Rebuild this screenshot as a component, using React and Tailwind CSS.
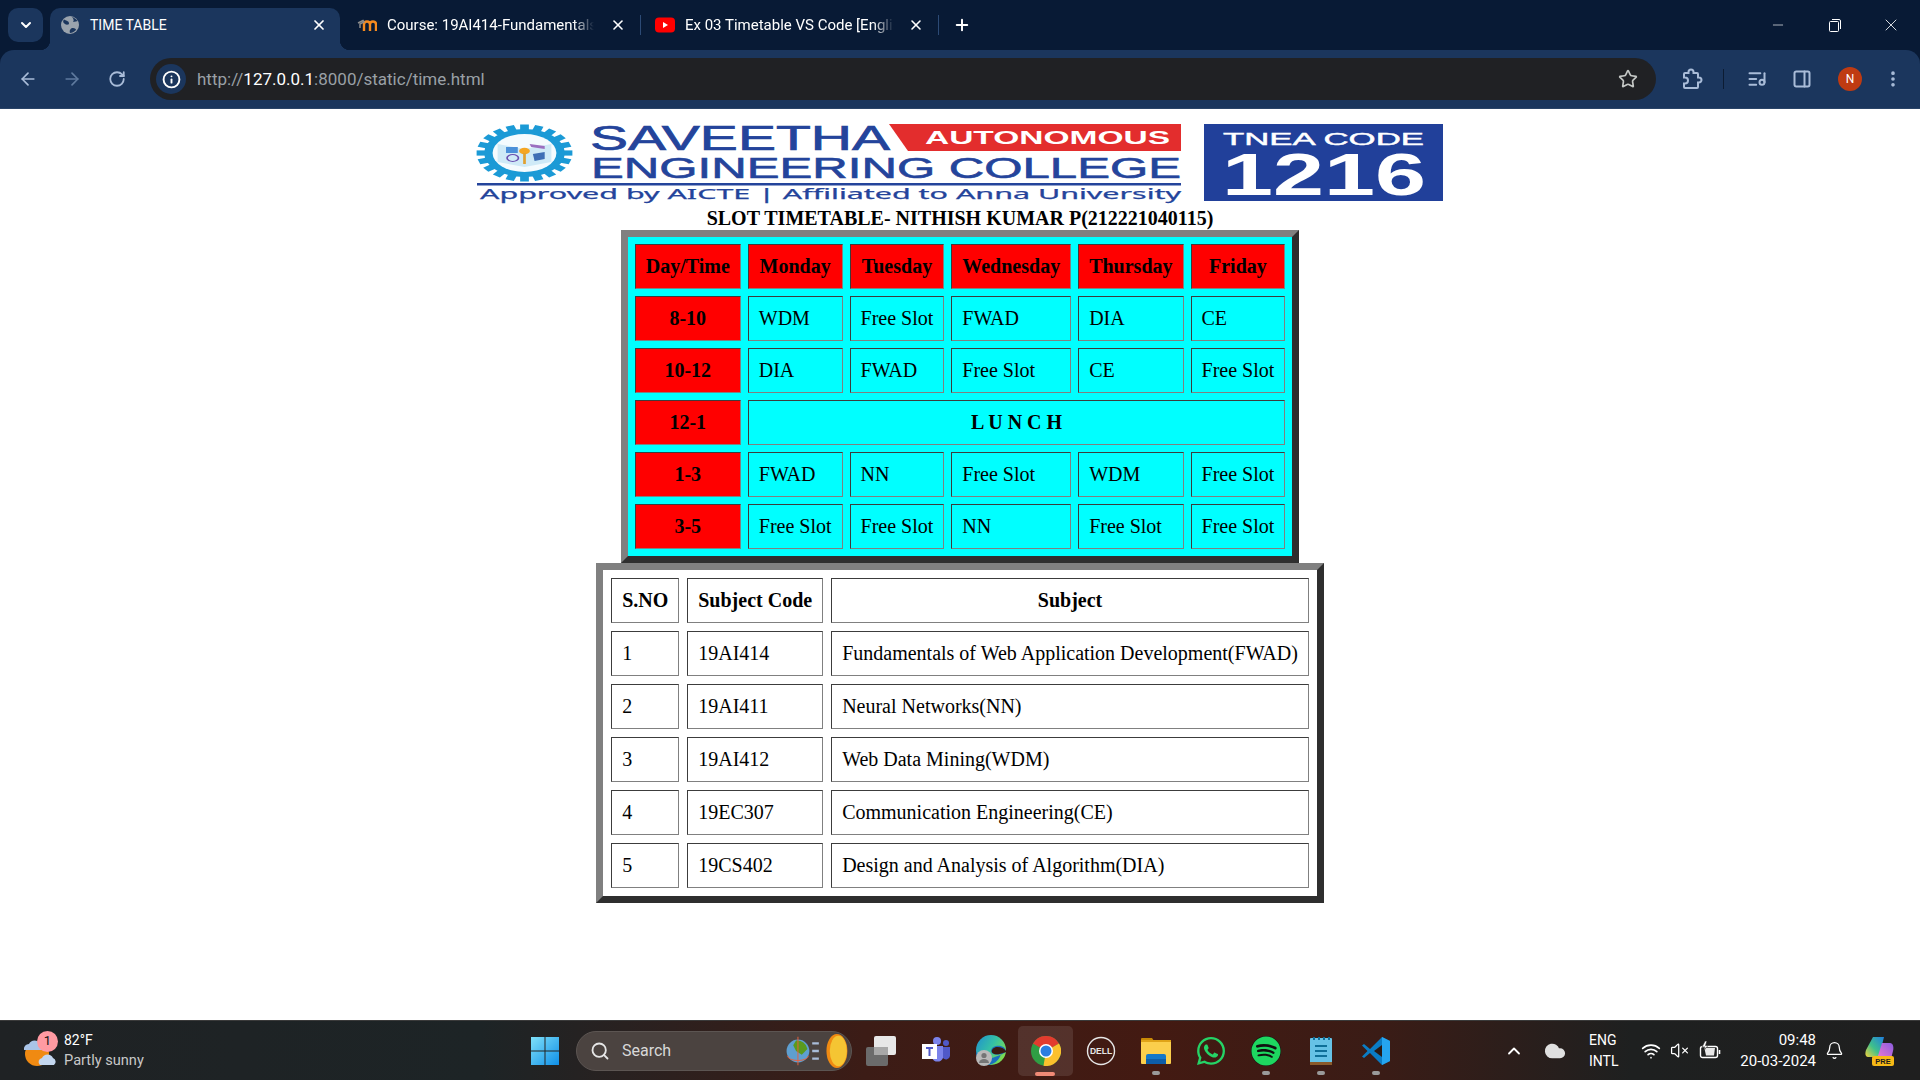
import React from "react";
import {
  ArrowLeft,
  ArrowRight,
  Bell,
  ChevronDown,
  ChevronUp,
  Cloud,
  EllipsisVertical,
  Info,
  ListMusic,
  Minus,
  PanelRight,
  Plus,
  RotateCw,
  Search,
  Star,
  VolumeX,
  Wifi,
  X,
} from "lucide-react";
import { FaSpotify, FaWhatsapp } from "react-icons/fa";

const timetable = [
  ["8-10", "WDM", "Free Slot", "FWAD", "DIA", "CE"],
  ["10-12", "DIA", "FWAD", "Free Slot", "CE", "Free Slot"],
  ["12-1"],
  ["1-3", "FWAD", "NN", "Free Slot", "WDM", "Free Slot"],
  ["3-5", "Free Slot", "Free Slot", "NN", "Free Slot", "Free Slot"],
];

const subjects = [
  ["1", "19AI414", "Fundamentals of Web Application Development(FWAD)"],
  ["2", "19AI411", "Neural Networks(NN)"],
  ["3", "19AI412", "Web Data Mining(WDM)"],
  ["4", "19EC307", "Communication Engineering(CE)"],
  ["5", "19CS402", "Design and Analysis of Algorithm(DIA)"],
];

// browser default look for <table border>: outset frame, inset cells
const tableFrame =
  "border-separate border-[7px] border-t-[#808080] border-l-[#808080] border-r-[#2e2e2e] border-b-[#2e2e2e]";
const cellBorder =
  "border border-t-[#3c3c3c] border-l-[#3c3c3c] border-r-[#808080] border-b-[#808080] p-[10px] h-[45px] leading-[23px]";

function SaveethaLogo() {
  const teeth = Array.from({ length: 20 }, (_, i) => i * 18);
  return (
    <svg viewBox="476 124 970 80" className="w-[970px] h-[80px] block">
      {/* gear badge */}
      <g transform="translate(524.5 153) scale(1.68 1)">
        {teeth.map((a) => (
          <rect key={a} x="-2.6" y="-28.5" width="5.2" height="6" fill="#1b9ad6" transform={`rotate(${a})`} />
        ))}
        <circle r="24" fill="#1b9ad6" />
        <circle r="19" fill="#f4fbfe" />
        <path d="M-16 -9 L0 -4 L16 -9 L16 9 L0 14 L-16 9 Z" fill="#cfeaf7" />
        <rect x="-11" y="-6" width="7" height="6" fill="#4a90d9" />
        <circle cx="-7" cy="5" r="3.4" fill="none" stroke="#6a4fb0" strokeWidth="1" />
        <path d="M5 1 L12 -1 L12 6 L6 8 Z" fill="#3f6fb5" />
        <path d="M3 -9 L12 -7 L12 -4 L4 -6 Z" fill="#9b6fc0" />
        <circle cy="-2" r="3.2" fill="#f5a623" />
        <rect x="-0.8" y="0" width="1.6" height="11" fill="#e0a030" />
      </g>
      <rect x="477" y="183" width="704" height="2.5" fill="#24449b" />

      <text x="590" y="150" fontFamily="Liberation Sans, sans-serif" fontSize="35" fill="#24449b" stroke="#24449b" strokeWidth="0.7" textLength="300" lengthAdjust="spacingAndGlyphs">
        SAVEETHA
      </text>
      <polygon points="889,124 1181,124 1181,151 908,151" fill="#e32d2d" />
      <text x="925" y="144" fontFamily="Liberation Sans, sans-serif" fontSize="18" fontWeight="700" fill="#fff" textLength="245" lengthAdjust="spacingAndGlyphs">
        AUTONOMOUS
      </text>
      <text x="591" y="178" fontFamily="Liberation Sans, sans-serif" fontSize="30" fill="#24449b" stroke="#24449b" strokeWidth="0.6" textLength="590" lengthAdjust="spacingAndGlyphs">
        ENGINEERING COLLEGE
      </text>
      <text x="480" y="199" fontFamily="Noto Sans, sans-serif" fontSize="15" fill="#24449b" stroke="#24449b" strokeWidth="0.25" textLength="701" lengthAdjust="spacingAndGlyphs">
        Approved by AICTE  |  Affiliated to Anna University
      </text>

      <rect x="1204" y="124" width="239" height="77" fill="#21409a" />
      <text x="1223" y="145" fontFamily="Liberation Sans, sans-serif" fontSize="17" fill="#fff" stroke="#fff" strokeWidth="0.4" textLength="201" lengthAdjust="spacingAndGlyphs">
        TNEA CODE
      </text>
      <text x="1222" y="195" fontFamily="Liberation Sans, sans-serif" fontSize="60" fontWeight="700" fill="#fff" textLength="204" lengthAdjust="spacingAndGlyphs">
        1216
      </text>
    </svg>
  );
}

function GlobeFavicon() {
  return (
    <svg viewBox="0 0 18 18" className="w-[18px] h-[18px] shrink-0">
      <circle cx="9" cy="9" r="9" fill="#9aa3ad" />
      <path d="M3 3.5 C6 5 8 5 8 7.5 C8 9 5 9 4 8 C2 7 1.5 5 3 3.5Z M9 17 C8 14 10 12 12 12 C14 12 15 13 15 14 C13 16 11 17 9 17Z M11 1 C13 3 13 5 12 6 C14 6 16 5 16.5 5 C15 3 13 1.5 11 1Z" fill="#1b365d" />
    </svg>
  );
}

function MoodleFavicon() {
  return (
    <svg viewBox="0 0 20 16" className="w-[20px] h-[16px] shrink-0">
      <path d="M7 14V7.5C7 5.5 8.5 4.5 10 4.5S13 5.5 13 7.5V14M13 7.5C13 5.5 14.5 4.5 16 4.5S19 5.5 19 7.5V14" fill="none" stroke="#f58a1f" strokeWidth="2.4" />
      <path d="M1 6L6 3.5L7 5L3 7V11" fill="none" stroke="#8a8a8a" strokeWidth="1.5" />
    </svg>
  );
}

function YoutubeFavicon() {
  return (
    <svg viewBox="0 0 20 16" className="w-[20px] h-[16px] shrink-0">
      <rect width="20" height="15" y="0.5" rx="4" fill="#f00" />
      <path d="M8 5L13 8L8 11Z" fill="#fff" />
    </svg>
  );
}

function Tab({ icon, title, active, textWidth }) {
  if (active) {
    return (
      <div className="relative w-[290px] h-[42px] bg-[#1b365d] rounded-t-[10px] flex items-center pl-[11px] pr-[13px] pb-[8px]">
        <span className="absolute left-[-10px] bottom-0 w-[10px] h-[10px] bg-[radial-gradient(circle_at_0_0,#081a35_10px,#1b365d_10.5px)]" />
        <span className="absolute right-[-10px] bottom-0 w-[10px] h-[10px] bg-[radial-gradient(circle_at_100%_0,#081a35_10px,#1b365d_10.5px)]" />
        {icon}
        <span className="ml-[11px] flex-1 text-[14px] text-white">{title}</span>
        <X size={16} strokeWidth={2.6} className="text-white" />
      </div>
    );
  }
  return (
    <div className="w-[298px] h-[42px] flex items-center pl-[14px] pr-[15px] pb-[8px] relative">
      {icon}
      <span
        className="ml-[10px] text-[15px] text-white whitespace-nowrap overflow-hidden [mask-image:linear-gradient(to_right,#000_90%,transparent)]"
        style={{ width: textWidth }}
      >
        {title}
      </span>
      <X size={16} strokeWidth={2.4} className="ml-auto text-white" />
      <span className="absolute right-0 top-[7px] h-[20px] w-px bg-[#2c4a75]" />
    </div>
  );
}

function TabStrip() {
  return (
    <div className="h-[50px] bg-[#081a35] flex items-end pl-[8px] shrink-0">
      <div className="w-[35px] h-[34px] mb-[8px] bg-[#1b365d] rounded-[10px] flex items-center justify-center mr-[7px]">
        <ChevronDown size={16} strokeWidth={3} className="text-white" />
      </div>
      <Tab active icon={<GlobeFavicon />} title="TIME TABLE" />
      <div className="flex ml-[3px]">
        <Tab icon={<MoodleFavicon />} title="Course: 19AI414-Fundamentals of Web" textWidth={207} />
        <Tab icon={<YoutubeFavicon />} title="Ex 03 Timetable VS Code [English]" textWidth={209} />
      </div>
      <Plus size={18} strokeWidth={2.6} className="text-white ml-[14px] mb-[16px]" />
      <div className="ml-auto flex items-center h-[50px] text-white pr-[19px]">
        <Minus size={16} strokeWidth={1} />
        <svg viewBox="0 0 14 14" className="w-[14px] h-[14px] ml-[42px] fill-none stroke-white">
          <rect x="1.5" y="3.5" width="9" height="10" rx="1" />
          <path d="M4 1.5H11A1.5 1.5 0 0 1 12.5 3V11" />
        </svg>
        <X size={20} strokeWidth={1} className="ml-[39px]" />
      </div>
    </div>
  );
}

function ExtensionIcon() {
  return (
    <svg viewBox="0 0 24 24" className="w-[24px] h-[24px] ml-[23px] fill-none stroke-[#a9bcd8] stroke-2">
      <path d="M6 6H9.5V5A2.5 2.5 0 0 1 14.5 5V6H18A1 1 0 0 1 19 7V10.5H20A2.5 2.5 0 0 1 20 15.5H19V20A1 1 0 0 1 18 21H6A1 1 0 0 1 5 20V16.5H6A3 3 0 0 0 6 10.5H5V7A1 1 0 0 1 6 6Z" />
    </svg>
  );
}

function Toolbar() {
  return (
    <div className="h-[59px] bg-[#1b365d] rounded-t-[14px] flex items-center pl-[18px] pr-[17px] shrink-0 border-b border-[#2a4468]">
      <ArrowLeft size={20} className="text-[#a9bcd8]" />
      <ArrowRight size={20} className="text-[#5f7a9e] ml-[24px]" />
      <RotateCw size={18} strokeWidth={2.4} className="text-[#a9bcd8] ml-[26px]" />
      <div className="ml-[24px] w-[1506px] h-[42px] rounded-full bg-[#202124] flex items-center pl-[6px] pr-[18px]">
        <div className="w-[30px] h-[30px] rounded-full bg-[#1b365d] flex items-center justify-center">
          <Info size={19} strokeWidth={2.4} className="text-white" />
        </div>
        <span className="ml-[11px] pt-[1px] text-[17px] text-[#9aa0a6]">
          http://<span className="text-white">127.0.0.1</span>:8000/static/time.html
        </span>
        <Star size={20} strokeWidth={2} className="ml-auto text-[#c4c7c5]" />
      </div>
      <ExtensionIcon />
      <span className="w-px h-[20px] bg-[#0c1c33] ml-[20px]" />
      <ListMusic size={20} strokeWidth={2.4} className="text-[#a9bcd8] ml-[23px]" />
      <PanelRight size={20} strokeWidth={2.4} className="text-[#a9bcd8] ml-[25px]" />
      <div className="w-[24px] h-[24px] rounded-full bg-[#bf3b12] ml-[26px] flex items-center justify-center text-white text-[12px]">N</div>
      <EllipsisVertical size={20} strokeWidth={2.4} className="text-[#a9bcd8] ml-[21px]" />
    </div>
  );
}

function Page() {
  return (
    <main className="flex-1 min-h-0 bg-white flex flex-col items-center overflow-hidden text-black text-[20px] leading-[23px] [font-family:'Liberation_Serif',serif]">
      <div className="mt-[15px] mb-[3px] pl-[1px]">
        <SaveethaLogo />
      </div>
      <h1 className="font-bold text-[20px] leading-[23px]">SLOT TIMETABLE- NITHISH KUMAR P(212221040115)</h1>
      <table className={`${tableFrame} border-spacing-[7px] bg-[#00ffff]`}>
        <thead>
          <tr>
            {["Day/Time", "Monday", "Tuesday", "Wednesday", "Thursday", "Friday"].map((d) => (
              <th key={d} className={`${cellBorder} bg-[#ff0000] font-bold`}>{d}</th>
            ))}
          </tr>
        </thead>
        <tbody>
          {timetable.map((row) => (
            <tr key={row[0]}>
              <th className={`${cellBorder} bg-[#ff0000] font-bold`}>{row[0]}</th>
              {row.length === 1 ? (
                <th colSpan={5} className={`${cellBorder} font-bold`}>L U N C H</th>
              ) : (
                row.slice(1).map((c, i) => (
                  <td key={i} className={cellBorder}>{c}</td>
                ))
              )}
            </tr>
          ))}
        </tbody>
      </table>
      <table className={`${tableFrame} border-spacing-[8px] bg-white`}>
        <thead>
          <tr>
            {["S.NO", "Subject Code", "Subject"].map((h) => (
              <th key={h} className={`${cellBorder} font-bold`}>{h}</th>
            ))}
          </tr>
        </thead>
        <tbody>
          {subjects.map((row) => (
            <tr key={row[0]}>
              {row.map((c, i) => (
                <td key={i} className={cellBorder}>{c}</td>
              ))}
            </tr>
          ))}
        </tbody>
      </table>
    </main>
  );
}

function WeatherIcon() {
  return (
    <div className="relative w-[36px] h-[36px]">
      <svg viewBox="0 0 36 36" className="w-[36px] h-[36px]">
        <circle cx="15" cy="21" r="12" fill="#f08a12" />
        <path d="M2 17a5 5 0 0 1 5-6 6 6 0 0 1 11 0 3 3 0 0 1 1 6Z" fill="#a9c4e8" />
        <path d="M18 32a4 4 0 0 1 2-7 6 6 0 0 1 11 0 4 4 0 0 1 1 7Z" fill="#c3d6ef" />
      </svg>
      <span className="absolute left-[15px] top-[-2px] w-[21px] h-[21px] rounded-full bg-[#ff9aa2] text-[#111] text-[13px] flex items-center justify-center">1</span>
    </div>
  );
}

function WindowsLogo() {
  return (
    <svg viewBox="0 0 30 30" className="w-[30px] h-[30px]">
      <defs>
        <linearGradient id="win" x1="0" y1="0" x2="1" y2="1">
          <stop offset="0" stopColor="#7fe0f8" />
          <stop offset="1" stopColor="#0f8fe8" />
        </linearGradient>
      </defs>
      <path d="M1 1H14.5V14.5H1ZM15.5 1H29V14.5H15.5ZM1 15.5H14.5V29H1ZM15.5 15.5H29V29H15.5Z" fill="url(#win)" />
    </svg>
  );
}

function SearchDoodle() {
  return (
    <svg viewBox="0 0 66 40" className="w-[66px] h-[38px] shrink-0 ml-auto mr-[2px]">
      <circle cx="14" cy="20" r="12" fill="#5e9fd0" />
      <path d="M12 9a11 11 0 0 1 12 9l-6 6-6-4-3-6Z" fill="#5a9a1e" />
      <path d="M14 5V35M3 25a11 5 0 0 0 22 0" fill="none" stroke="#e8603c" strokeWidth="1" />
      <path d="M36 12H29M36 20H29M36 28H29" stroke="#a9bcd8" strokeWidth="2.5" />
      <ellipse cx="55" cy="20" rx="11" ry="18" fill="#f08a12" />
      <ellipse cx="56.5" cy="20" rx="9" ry="16" fill="#f5c533" />
    </svg>
  );
}

function TaskView() {
  return (
    <svg viewBox="0 0 32 32" className="w-[32px] h-[32px]">
      <rect x="1" y="12" width="22" height="19" rx="2" fill="#6b6b6b" />
      <rect x="9" y="1" width="22" height="19" rx="2" fill="#e8e8e8" />
      <rect x="9" y="12" width="14" height="8" fill="#a8a8a8" />
    </svg>
  );
}

function TeamsIcon() {
  return (
    <svg viewBox="0 0 30 30" className="w-[30px] h-[30px]">
      <circle cx="16" cy="5" r="4" fill="#7b83eb" />
      <circle cx="25" cy="7" r="3" fill="#5059c9" />
      <path d="M11 10H22V22A6 6 0 0 1 11 22Z" fill="#7b83eb" />
      <path d="M22 11H29V20A4 4 0 0 1 22 22Z" fill="#5059c9" />
      <rect x="1" y="8" width="15" height="15" fill="#fff" />
      <path d="M5 11H12V13H9.5V20H7.5V13H5Z" fill="#5059c9" />
    </svg>
  );
}

function EdgeIcon() {
  return (
    <svg viewBox="0 0 32 32" className="w-[32px] h-[32px]">
      <defs>
        <linearGradient id="edgeA" x1="0" y1="0" x2="1" y2="0.6">
          <stop offset="0" stopColor="#1f8fd0" />
          <stop offset="0.55" stopColor="#35c1a5" />
          <stop offset="1" stopColor="#7ddc50" />
        </linearGradient>
      </defs>
      <circle cx="16" cy="15" r="15" fill="url(#edgeA)" />
      <path d="M31 17 C31 12 26 10 21 11 C17 12 15 15 17 18 C19 20 23 20 26 19 C24 26 18 30 12 30 C6 29 1 24 1 17 C5 22 11 25 17 24 C13 23 21 23 31 17Z" fill="#1a6fc0" />
      <path d="M31 16 C29 13 25 11.5 21 12 C18 13 16 15 17 17.5 C19 20 23 20 31 17Z" fill="#3a1a12" />
      <circle cx="9" cy="23" r="8" fill="#b9b9b9" />
      <circle cx="9" cy="20.5" r="2.6" fill="#757575" />
      <path d="M4 28a5 4 0 0 1 10 0Z" fill="#757575" />
    </svg>
  );
}

function ChromeIcon() {
  return (
    <svg viewBox="0 0 24 24" className="w-[30px] h-[30px]">
      <circle cx="12" cy="12" r="12" fill="#2f9e44" />
      <path d="M12 12L1.6 6A12 12 0 0 1 22.4 6Z" fill="#e33b2e" />
      <path d="M12 12L22.4 6A12 12 0 0 1 10 23.8Z" fill="#fbc02d" />
      <circle cx="12" cy="12" r="5.6" fill="#fff" />
      <circle cx="12" cy="12" r="4.4" fill="#2a7de1" />
    </svg>
  );
}

function DellIcon() {
  return (
    <svg viewBox="0 0 30 30" className="w-[30px] h-[30px]">
      <circle cx="15" cy="15" r="13.5" fill="none" stroke="#e6e6e6" strokeWidth="1.4" />
      <text x="15" y="18" textAnchor="middle" fontFamily="Liberation Sans, sans-serif" fontSize="8.5" fontWeight="700" fill="#e6e6e6">DELL</text>
    </svg>
  );
}

function FolderIcon() {
  return (
    <svg viewBox="0 0 30 30" className="w-[30px] h-[30px]">
      <path d="M0 3A1 1 0 0 1 1 2H11L13 5H0Z" fill="#c98a06" />
      <rect x="0" y="4" width="30" height="24" rx="1" fill="#fbcf4c" />
      <rect x="0" y="4" width="30" height="2" fill="#e0a417" />
      <rect x="5" y="18" width="20" height="10" rx="2" fill="#1478c8" />
      <rect x="5" y="23" width="20" height="5" fill="#0e5ea8" />
    </svg>
  );
}

function NotepadIcon() {
  return (
    <svg viewBox="0 0 24 30" className="w-[24px] h-[30px]">
      <rect x="1" y="2" width="22" height="26" rx="1" fill="#66c2e6" />
      <rect x="1" y="26" width="22" height="3" fill="#8a5a2b" />
      <path d="M5 1V4M10 1V4M15 1V4M20 1V4" stroke="#0f6f98" strokeWidth="2" />
      <path d="M6 10H18M6 15H18M6 20H18" stroke="#0f6f98" strokeWidth="2" />
    </svg>
  );
}

function VsCodeIcon() {
  return (
    <svg viewBox="0 0 30 30" className="w-[30px] h-[30px]">
      <path d="M21 1L29 5V25L21 29L9 17L3 22L1 20.5L6.5 15L1 9.5L3 8L9 13Z" fill="#0a7cc4" />
      <path d="M21 1L29 5V25L21 29V21V9Z" fill="#25a5ef" />
      <path d="M21 9V21L13 15Z" fill="#2a1a14" />
    </svg>
  );
}

function CopilotIcon() {
  return (
    <svg viewBox="0 0 30 32" className="w-[30px] h-[32px]">
      <defs>
        <linearGradient id="copA" x1="0" y1="1" x2="1" y2="0">
          <stop offset="0" stopColor="#f5d33c" />
          <stop offset="0.45" stopColor="#3fc08a" />
          <stop offset="1" stopColor="#1f7fe0" />
        </linearGradient>
        <linearGradient id="copB" x1="0" y1="1" x2="1" y2="0">
          <stop offset="0" stopColor="#f07ad0" />
          <stop offset="1" stopColor="#8a5ce0" />
        </linearGradient>
      </defs>
      <path d="M8 2H19L14 22H3C0 22 0 18 1 15Z" fill="url(#copA)" />
      <path d="M17 8H25C28 8 29 12 28 16L26 24H12Z" fill="url(#copB)" />
      <rect x="7" y="21" width="22" height="10" rx="2" fill="#f7b916" />
      <text x="18" y="29" textAnchor="middle" fontFamily="Liberation Sans, sans-serif" fontSize="7.5" fontWeight="700" fill="#1a1a1a">PRE</text>
    </svg>
  );
}

function BatteryIcon() {
  return (
    <svg viewBox="0 0 22 22" className="w-[22px] h-[22px] ml-[10px] fill-none stroke-white">
      <rect x="1.5" y="6.5" width="17" height="11" rx="2" strokeWidth="1.4" />
      <path d="M20.5 10V14" strokeWidth="1.6" />
      <path d="M5 6.5L7 15.5H15L16 8H8Z" fill="#e8e8e8" stroke="none" />
      <path d="M6 1L3 7H6L4.5 11L9 5.5H6.5L8 1Z" fill="#fff" stroke="#1f1f1f" strokeWidth="0.6" />
    </svg>
  );
}

function TaskIcon({ children, running, active }) {
  return (
    <div className={`relative w-[55px] h-[50px] flex items-center justify-center rounded-[5px] ${active ? "bg-white/10" : ""}`}>
      {children}
      {running && <span className="absolute bottom-[1px] left-[24px] w-[8px] h-[4px] rounded-full bg-[#9a9a9a]" />}
      {active && <span className="absolute bottom-0 left-[17px] w-[20px] h-[4px] rounded-full bg-[#f08a76]" />}
    </div>
  );
}

function Taskbar() {
  return (
    <footer className="h-[60px] shrink-0 flex items-center text-white border-t border-[#3a3a3a] bg-[linear-gradient(to_right,#1f2224_0%,#1d2426_25%,#3c1c16_45%,#431a12_60%,#3a1c16_72%,#1e2020_85%,#1f1f1f_100%)] [font-family:Roboto,sans-serif]">
      <div className="w-[530px] shrink-0 flex items-center pl-[22px]">
        <WeatherIcon />
        <div className="ml-[6px] leading-[20px] -mt-[2px]">
          <div className="text-[14px]">82°F</div>
          <div className="text-[14.6px] text-[#c8c8c8]">Partly sunny</div>
        </div>
      </div>
      <WindowsLogo />
      <div className="ml-[16px] w-[276px] h-[40px] rounded-full bg-[#4b4340] border border-[#5c5552] flex items-center pl-[13px]">
        <Search size={20} strokeWidth={2.2} className="text-[#e6e6e6]" />
        <span className="ml-[12px] text-[16px] text-[#d8d8d8]">Search</span>
        <SearchDoodle />
      </div>
      <div className="flex items-center ml-[1px]">
        <TaskIcon><TaskView /></TaskIcon>
        <TaskIcon><TeamsIcon /></TaskIcon>
        <TaskIcon><EdgeIcon /></TaskIcon>
        <TaskIcon active><ChromeIcon /></TaskIcon>
        <TaskIcon><DellIcon /></TaskIcon>
        <TaskIcon running><FolderIcon /></TaskIcon>
        <TaskIcon><FaWhatsapp size={32} className="text-[#25d366]" /></TaskIcon>
        <TaskIcon running>
          <span className="bg-[#111] rounded-full"><FaSpotify size={30} className="text-[#1ed760] block" /></span>
        </TaskIcon>
        <TaskIcon running><NotepadIcon /></TaskIcon>
        <TaskIcon running><VsCodeIcon /></TaskIcon>
      </div>
      <div className="ml-auto flex items-center pr-[25px]">
        <ChevronUp size={20} strokeWidth={2.2} />
        <Cloud size={22} fill="#e0e0e0" className="text-[#e0e0e0] ml-[20px]" />
        <div className="ml-[23px] text-[14px] leading-[21px] w-[40px]">
          <div>ENG</div>
          <div>INTL</div>
        </div>
        <Wifi size={20} className="ml-[12px]" />
        <VolumeX size={19} strokeWidth={1.6} className="ml-[9px]" />
        <BatteryIcon />
        <div className="ml-[15px] w-[80px] text-right text-[15px] leading-[21px]">
          <div>09:48</div>
          <div>20-03-2024</div>
        </div>
        <Bell size={19} strokeWidth={1.6} className="ml-[9px]" />
        <div className="ml-[21px]"><CopilotIcon /></div>
      </div>
    </footer>
  );
}

export default function App() {
  return (
    <div className="w-screen h-screen flex flex-col overflow-hidden bg-[#081a35] [font-family:Roboto,sans-serif]">
      <TabStrip />
      <Toolbar />
      <Page />
      <Taskbar />
    </div>
  );
}
